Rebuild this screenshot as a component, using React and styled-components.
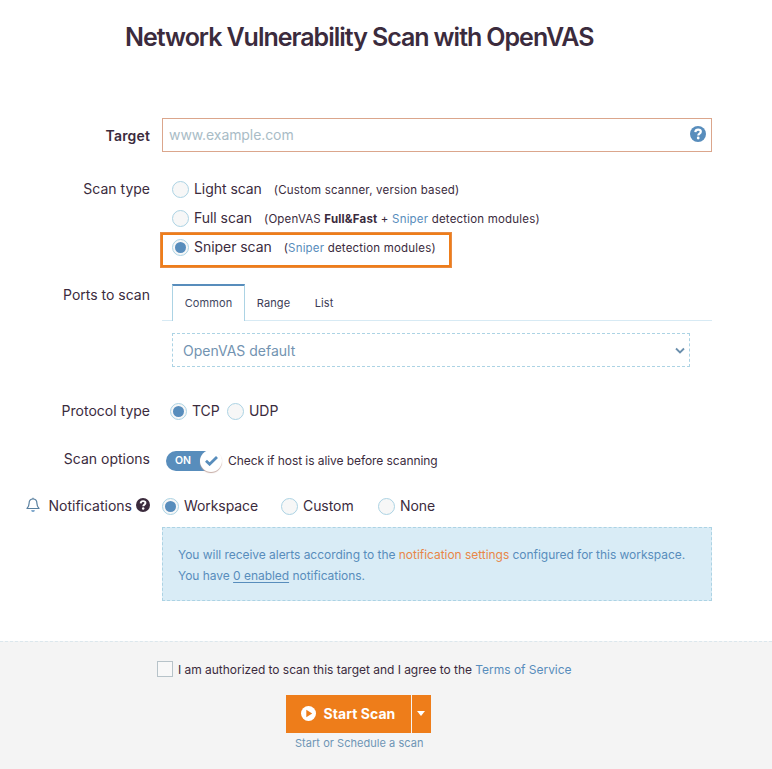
import React from "react";
import styled, { createGlobalStyle } from "styled-components";

const GlobalStyle = createGlobalStyle`
  *, *::before, *::after { box-sizing: border-box; }
  body {
    margin: 0;
    background: #fff;
    color: #3b2b3d;
    font-family: Inter, "Liberation Sans", sans-serif;
  }
`;

const Page = styled.main`
  width: 772px;
  height: 769px;
  display: flex;
  flex-direction: column;
  overflow: hidden;
`;

const Title = styled.h1`
  margin: 0 0 0 125px;
  padding-top: 21px;
  height: 118px;
  font-size: 25px;
  line-height: 32px;
  font-weight: 600;
  letter-spacing: -1px;
  word-spacing: -0.3px;
  white-space: nowrap;
`;

const Form = styled.form`
  flex: none;
  height: 523px;
`;

const Field = styled.div`
  display: grid;
  grid-template-columns: 150px 550px;
  column-gap: 12px;
  height: ${(p) => p.$height}px;
`;

const Label = styled.div`
  display: flex;
  align-items: center;
  justify-content: flex-end;
  height: ${(p) => p.$height || 28}px;
  padding-top: ${(p) => p.$drop || 0}px;
  font-size: 14px;
  font-weight: ${(p) => (p.$bold ? 600 : 400)};
  letter-spacing: ${(p) => (p.$bold ? 0.15 : 0)}px;
  white-space: nowrap;
`;

const TargetBox = styled.div`
  display: flex;
  align-items: center;
  justify-content: space-between;
  height: 34px;
  padding: 0 5px 2px 6px;
  border: 1px solid #dba68c;
`;

const TargetInput = styled.input`
  flex: 1;
  border: 0;
  outline: 0;
  padding: 0;
  background: transparent;
  font: 14px Inter, sans-serif;
  letter-spacing: -0.08px;
  &::placeholder { color: #a9bcc6; opacity: 1; }
`;

const Options = styled.div`
  display: flex;
  flex-direction: column;
  padding-left: 10px;
`;

const Option = styled.label`
  position: relative;
  display: flex;
  align-items: center;
  height: 29px;
  font-size: 14px;
  letter-spacing: -0.05px;
  white-space: nowrap;
`;

const Highlight = styled.span`
  position: absolute;
  left: -12px;
  top: 0;
  width: 292px;
  height: 36px;
  border: 3px solid #ee7d1a;
  outline: 1px solid rgba(224, 160, 120, 0.45);
  outline-offset: -1px;
`;

const Radio = styled.span`
  flex: none;
  display: grid;
  place-items: center;
  width: 17px;
  height: 17px;
  margin-right: 5px;
  border: 1px solid #acd3e4;
  border-radius: 50%;
  background: #f7f7f7;
  ${Option} & {
    margin-top: 2px;
  }
  &::after {
    content: "";
    width: 11px;
    height: 11px;
    border-radius: 50%;
    background: ${(p) => (p.$on ? "#588dbc" : "transparent")};
  }
`;

const Hint = styled.span`
  margin-left: 12px;
  padding-top: 2px;
  font-size: 11.5px;
  letter-spacing: 0.19px;
`;

const Link = styled.a`
  color: ${(p) => (p.$orange ? "#e88748" : "#588dbc")};
  text-decoration: ${(p) => (p.$underline ? "underline" : "none")};
  text-underline-offset: 2px;
`;

const Ports = styled.div`
  padding-top: 3px;
`;

const Tabs = styled.div`
  display: flex;
  height: 37px;
  padding-left: 10px;
  border-bottom: 1px solid #d7eaf4;
`;

const Tab = styled.button`
  width: ${(p) => p.$width}px;
  height: ${(p) => (p.$active ? 37 : 36)}px;
  padding: 0 0 ${(p) => (p.$active ? 1 : 0)}px;
  border: 0 solid #acd3e4;
  border-width: ${(p) => (p.$active ? "2px 1px 0" : "2px 0 0")};
  border-top-color: ${(p) => (p.$active ? "#588dbc" : "transparent")};
  background: #fff;
  color: ${(p) => (p.$active ? "#3f4761" : "#3b3b55")};
  font: 11px Inter, sans-serif;
  letter-spacing: 0.1px;
`;

const Select = styled.div`
  display: flex;
  align-items: center;
  justify-content: space-between;
  width: 518px;
  height: 34px;
  margin: 12px 0 0 10px;
  padding: 1px 4px 0 10px;
  border: 1px dashed #acd3e4;
  color: #7293b1;
  font-size: 14px;
  letter-spacing: 0;
`;

const RadioLine = styled.div`
  display: flex;
  align-items: center;
  height: 30px;
  padding-left: ${(p) => p.$indent || 0}px;
`;

const Choice = styled.label`
  display: flex;
  align-items: center;
  width: ${(p) => p.$width}px;
  font-size: 14px;
  letter-spacing: -0.07px;
  white-space: nowrap;
`;

const ChoiceText = styled.span`
  margin-bottom: 2px;
`;

const OptionLine = styled.div`
  display: flex;
  align-items: center;
  height: 30px;
  padding-left: 4px;
  font-size: 12px;
`;

const Toggle = styled.span`
  display: flex;
  align-items: center;
  justify-content: space-between;
  width: 55px;
  height: 20px;
  margin-top: 2px;
  margin-right: 7px;
  padding-left: 9px;
  border-radius: 10px;
  background: #588dbc;
  color: #fff;
  font-size: 10.5px;
  font-weight: 600;
  line-height: 16px;
`;

const ToggleText = styled.span`
  margin-bottom: 1px;
`;

const Knob = styled.span`
  display: grid;
  place-items: center;
  flex: none;
  width: 22px;
  height: 22px;
  margin-right: -1px;
  border-radius: 50%;
  background: #fff;
  box-shadow: 0 1px 1px #c5aaa3;
`;

const Alert = styled.div`
  width: 550px;
  height: 74px;
  margin-left: 162px;
  padding: 16px 15px;
  border: 1px dashed #acd3e4;
  background: #d9ecf6;
  color: #588dbc;
  font-size: 12px;
  line-height: 21px;
  letter-spacing: -0.04px;
  white-space: nowrap;
`;

const Footer = styled.footer`
  flex: 1;
  border-top: 1px dashed #dbe7ed;
  background: #f4f4f4;
`;

const Consent = styled.label`
  display: flex;
  align-items: center;
  margin: 19px 0 0 157px;
  height: 17px;
  font-size: 12px;
  white-space: nowrap;
`;

const CheckBox = styled.span`
  width: 16px;
  height: 16px;
  margin-right: 5px;
  margin-bottom: 1px;
  border: 1px solid #b7c3c9;
  background: #f8f8f8;
`;

const Statement = styled.span`
  letter-spacing: ${(p) => p.$spacing}px;
`;

const Actions = styled.div`
  display: flex;
  gap: 1px;
  margin: 17px 0 0 286px;
`;

const Action = styled.button`
  display: flex;
  align-items: center;
  justify-content: center;
  gap: 8px;
  width: ${(p) => p.$width}px;
  height: 38px;
  padding: 0 1px 1px 0;
  border: 0;
  background: #ee7d1a;
  color: #fff;
  font: 700 14px Inter, sans-serif;
  letter-spacing: 0.05px;
  white-space: nowrap;
`;

const Note = styled.div`
  margin: 3px 0 0 295px;
  color: #6e94b4;
  font-size: 11px;
  line-height: 14px;
  letter-spacing: 0.04px;
  white-space: nowrap;
`;

const Icon = styled.svg`
  flex: none;
  display: block;
  margin-left: ${(p) => p.$left || 0}px;
  margin-right: ${(p) => p.$right || 0}px;
`;

const Question = ({ size, color, left }) => (
  <Icon $left={left} width={size} height={size} viewBox="0 0 16 16">
    <circle cx="8" cy="8" r="8" fill={color} />
    <path d="M5.300 6.100C5.500 4.300 6.600 3.600 8.100 3.600c1.600 0 2.700.9 2.700 2.200 0 1.800-2.500 1.800-2.500 3.600" fill="none" stroke="#fff" strokeWidth="2.200" />
    <circle cx="8.200" cy="12" r="1.400" fill="#fff" />
  </Icon>
);

export default function App() {
  return (
    <>
      <GlobalStyle />
      <Page>
        <Title>Network Vulnerability Scan with OpenVAS</Title>
        <Form>
          <Field $height={56}>
            <Label $bold $height={34} $drop={1}>Target</Label>
            <TargetBox>
              <TargetInput placeholder="www.example.com" />
              <Question size={16} color="#588dbc" />
            </TargetBox>
          </Field>

          <Field $height={107}>
            <Label $height={29}>Scan type</Label>
            <Options>
              <Option><Radio />Light scan<Hint>(Custom scanner, version based)</Hint></Option>
              <Option>
                <Radio />Full scan
                <Hint>(OpenVAS <b>Full&amp;Fast</b> + <Link>Sniper</Link> detection modules)</Hint>
              </Option>
              <Option>
                <Radio $on />Sniper scan
                <Hint>(<Link>Sniper</Link> detection modules)</Hint>
                <Highlight />
              </Option>
            </Options>
          </Field>

          <Field $height={115}>
            <Label $height={27}>Ports to scan</Label>
            <Ports>
              <Tabs>
                <Tab type="button" $active $width={73}>Common</Tab>
                <Tab type="button" $width={57}>Range</Tab>
                <Tab type="button" $width={44}>List</Tab>
              </Tabs>
              <Select>
                OpenVAS default
                <Icon width="10" height="8" viewBox="0 0 10 8" fill="none">
                  <path d="M1 1.500 5 5.500 9 1.500" stroke="#6b8fad" strokeWidth="1.800" />
                </Icon>
              </Select>
            </Ports>
          </Field>

          <Field $height={49}>
            <Label>Protocol type</Label>
            <RadioLine $indent={8}>
              <Choice $width={57}><Radio $on /><ChoiceText>TCP</ChoiceText></Choice>
              <Choice $width={60}><Radio /><ChoiceText>UDP</ChoiceText></Choice>
            </RadioLine>
          </Field>

          <Field $height={46}>
            <Label $height={27}>Scan options</Label>
            <OptionLine>
              <Toggle>
                <ToggleText>ON</ToggleText>
                <Knob>
                  <Icon width="13" height="10" viewBox="0 0 13 10" fill="none">
                    <path d="M1 4.800 4.600 8.200 12 1" stroke="#588dbc" strokeWidth="2.800" />
                  </Icon>
                </Knob>
              </Toggle>
              <Statement $spacing={-0.07}>Check if host is alive before scanning</Statement>
            </OptionLine>
          </Field>

          <Field $height={36}>
            <Label>
              <Icon $right={8} width="14" height="16" viewBox="0 0 14 16" fill="none" stroke="#587f9f" strokeWidth="1.200">
                <path d="M7 2C4.500 2 3.100 3.800 3.100 6.200c0 3-1.100 4.200-2.100 5.300h12c-1-1.100-2.100-2.300-2.100-5.300C10.900 3.800 9.500 2 7 2Z" strokeLinejoin="round" />
                <path d="M7 2V.7" />
                <path d="M5.200 13.200h3.600c-.1 1-.8 1.600-1.800 1.600s-1.700-.6-1.800-1.600Z" fill="#588dbc" stroke="none" />
              </Icon>
              Notifications
              <Question size={14} color="#3b2b3d" left={4} />
            </Label>
            <RadioLine>
              <Choice $width={119}><Radio $on /><ChoiceText>Workspace</ChoiceText></Choice>
              <Choice $width={97}><Radio /><ChoiceText>Custom</ChoiceText></Choice>
              <Choice $width={70}><Radio /><ChoiceText>None</ChoiceText></Choice>
            </RadioLine>
          </Field>

          <Alert>
            You will receive alerts according to the <Link $orange>notification settings</Link> configured for this workspace.
            <br />
            You have <Link $underline>0 enabled</Link> notifications.
          </Alert>
        </Form>
        <Footer>
          <Consent>
            <CheckBox />
            <Statement $spacing={-0.03}>I am authorized to scan this target and I agree to the <Link>Terms of Service</Link></Statement>
          </Consent>
          <Actions>
            <Action type="button" $width={125}>
              <Icon width="15" height="15" viewBox="0 0 15 15">
                <circle cx="7.500" cy="7.500" r="7.500" fill="#fff" />
                <path d="M5.300 3.700v7.600l5.900-3.800Z" fill="#ee7d1a" />
              </Icon>
              Start Scan
            </Action>
            <Action type="button" $width={19}>
              <Icon width="8" height="5" viewBox="0 0 8 5"><path d="M0 0h8L4 5Z" fill="#fff" /></Icon>
            </Action>
          </Actions>
          <Note>Start or Schedule a scan</Note>
        </Footer>
      </Page>
    </>
  );
}
